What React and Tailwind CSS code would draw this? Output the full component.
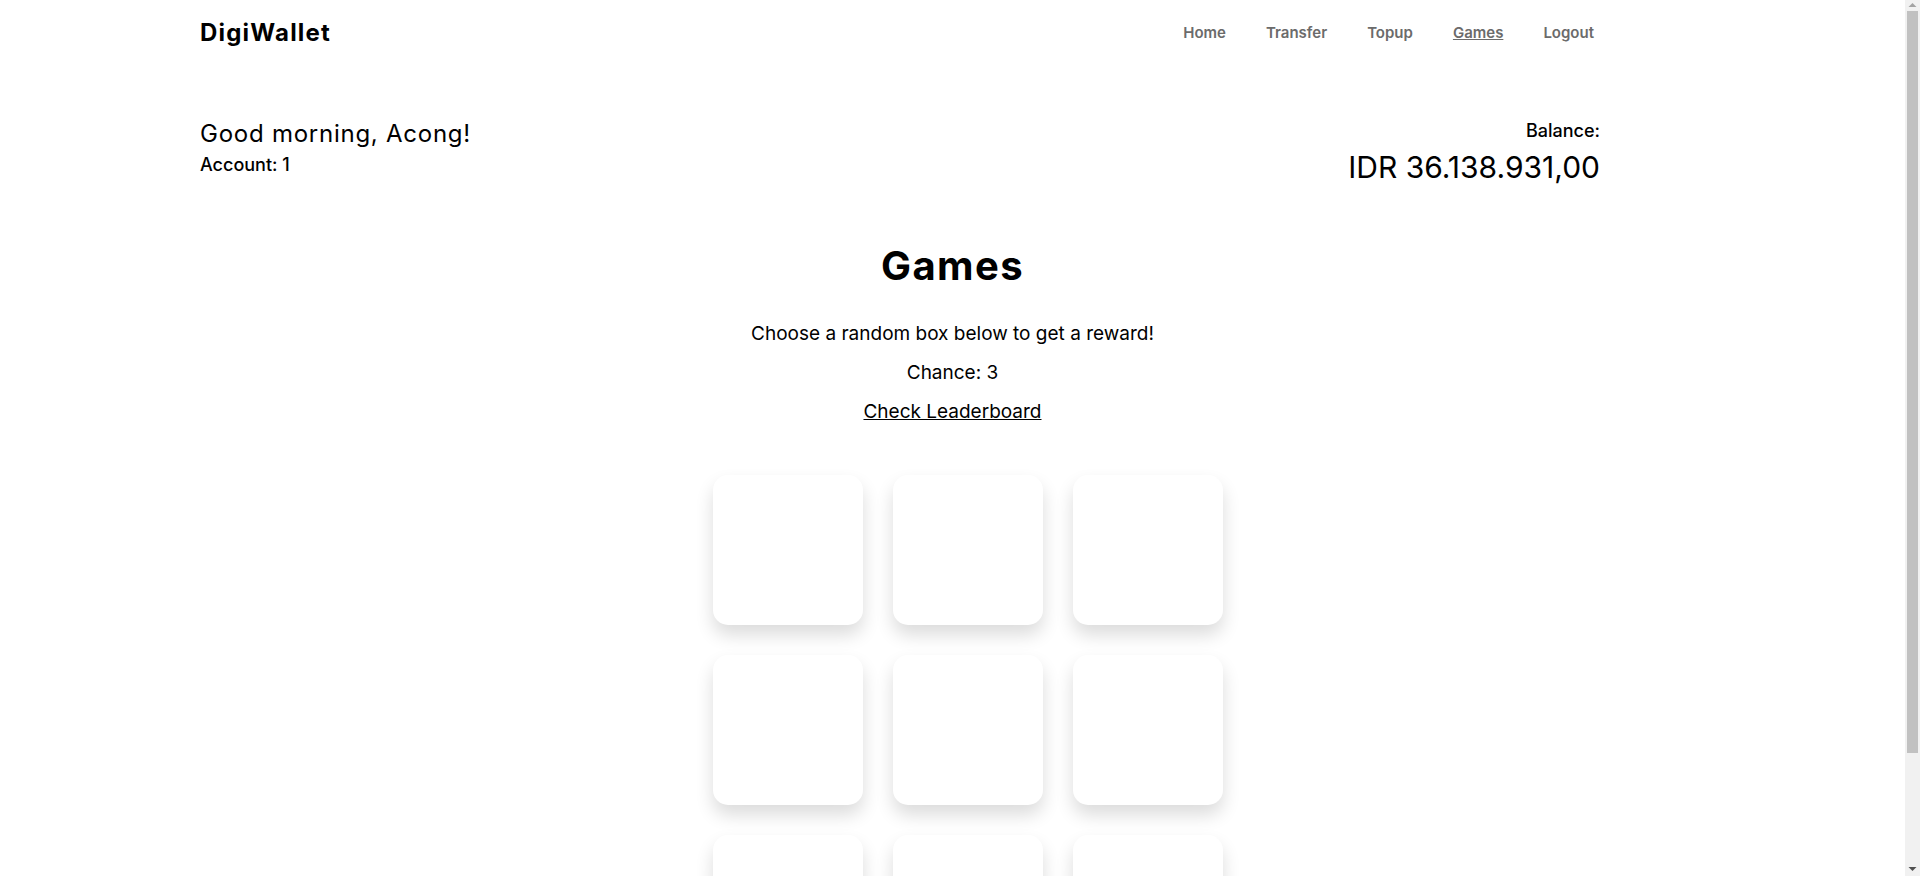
const links = ["Home", "Transfer", "Topup", "Games", "Logout"];
const boxes = Array.from({ length: 9 }, (_, i) => i);

function Scrollbar() {
  return (
    <div className="w-[15px] shrink-0 h-full bg-[#f1f1f1] flex flex-col items-center">
      <svg width="15" height="11" viewBox="0 0 15 11" className="shrink-0">
        <path d="M3.5 7 L7.5 3 L11.5 7 Z" fill="#a3a3a3" />
      </svg>
      <div className="w-[11px] h-[742px] bg-[#c1c1c1] shrink-0" />
      <div className="flex-1" />
      <svg width="15" height="12" viewBox="0 0 15 12" className="shrink-0">
        <path d="M3.5 3 L11.5 3 L7.5 7 Z" fill="#505050" />
      </svg>
    </div>
  );
}

export default function App() {
  return (
    <div className="h-[876px] flex overflow-hidden bg-white text-black font-['Inter',sans-serif]">
      <main className="flex-1 h-full overflow-hidden">
        <nav className="ml-[200px] w-[1400px] h-16 pt-[2px] flex items-center justify-between">
          <a href="#" className="text-[24px] font-bold leading-none tracking-[1.2px]">
            DigiWallet
          </a>
          <ul className="flex items-center gap-10 mr-[6px] text-[15px] font-semibold text-[#6b6b6b]">
            {links.map((link) => (
              <li key={link}>
                <a href="#" className={link === "Games" ? "underline" : ""}>
                  {link}
                </a>
              </li>
            ))}
          </ul>
        </nav>

        <section className="ml-[200px] w-[1400px] mt-[55px] flex justify-between">
          <div>
            <h2 className="text-[24px] leading-[30px] tracking-[0.75px]">Good morning, Acong!</h2>
            <p className="mt-[4px] text-[18px] font-medium leading-6">Account: 1</p>
          </div>
          <div className="text-right">
            <p className="text-[18px] font-medium leading-6">Balance:</p>
            <p className="mt-[4px] text-[30px] leading-[40px]">IDR 36.138.931,00</p>
          </div>
        </section>

        <section className="mt-[55px] flex flex-col items-center">
          <h1 className="text-[40px] font-bold leading-[48px] tracking-[1.4px]">Games</h1>
          <p className="mt-[30px] text-[19px] leading-[28px]">
            Choose a random box below to get a reward!
          </p>
          <p className="mt-[11px] text-[19px] leading-[28px]">Chance: 3</p>
          <a href="#" className="mt-[11px] text-[19px] leading-[28px] underline">
            Check Leaderboard
          </a>

          <div className="mt-[49px] pl-[30px] grid grid-cols-3 gap-[30px] pb-[10px]">
            {boxes.map((i) => (
              <button
                key={i}
                className="w-[150px] h-[150px] rounded-[15px] bg-white shadow-[0_10px_18px_rgba(0,0,0,0.14)]"
              />
            ))}
          </div>
        </section>
      </main>
      <Scrollbar />
    </div>
  );
}
